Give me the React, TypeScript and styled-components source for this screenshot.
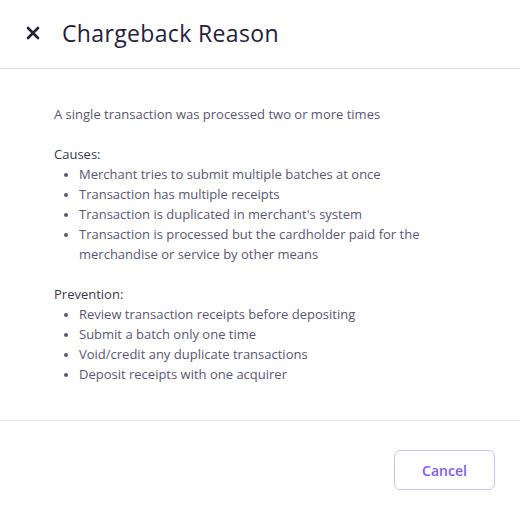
import React from 'react';
import styled, { createGlobalStyle } from 'styled-components';

const GlobalStyle = createGlobalStyle`
  html, body {
    margin: 0;
    padding: 0;
    background: #ffffff;
  }
  body {
    font-family: "Open Sans", "Noto Sans", sans-serif;
  }
`;

const causes = [
  'Merchant tries to submit multiple batches at once',
  'Transaction has multiple receipts',
  "Transaction is duplicated in merchant's system",
  'Transaction is processed but the cardholder paid for the merchandise or service by other means',
];

const prevention = [
  'Review transaction receipts before depositing',
  'Submit a batch only one time',
  'Void/credit any duplicate transactions',
  'Deposit receipts with one acquirer',
];

const App = () => {
  return (
    <>
      <GlobalStyle />
      <Modal>
        <Header>
          <CloseButton aria-label="Close">
            <svg width="14" height="14" viewBox="0 0 14 14">
              <path d="M2 2 L12 12 M12 2 L2 12" stroke="#25213b" strokeWidth="2.6" strokeLinecap="round" />
            </svg>
          </CloseButton>
          <Title>Chargeback Reason</Title>
        </Header>
        <Body>
          <Summary>A single transaction was processed two or more times</Summary>
          <Section>
            <SectionTitle>Causes:</SectionTitle>
            <List>
              {causes.map((c) => (
                <Item key={c}>{c}</Item>
              ))}
            </List>
          </Section>
          <Section>
            <SectionTitle>Prevention:</SectionTitle>
            <List>
              {prevention.map((p) => (
                <Item key={p}>{p}</Item>
              ))}
            </List>
          </Section>
        </Body>
        <Footer>
          <CancelButton>Cancel</CancelButton>
        </Footer>
      </Modal>
    </>
  );
};

const Modal = styled.div`
  width: 520px;
  height: 516px;
  display: flex;
  flex-direction: column;
  background: #fff;
`;

const Header = styled.div`
  height: 69px;
  box-sizing: border-box;
  display: flex;
  align-items: center;
  gap: 22px;
  padding: 0 0 2px 25px;
  border-bottom: 1px solid #dcdbe2;
`;

const CloseButton = styled.button`
  border: none;
  background: none;
  padding: 0;
  width: 15px;
  height: 15px;
  display: flex;
  align-items: center;
  justify-content: center;
  cursor: pointer;
`;

const Title = styled.h1`
  margin: 0;
  font-size: 23px;
  font-weight: 500;
  color: #25213b;
  letter-spacing: 0.35px;
`;

const Body = styled.div`
  flex: 1;
  padding: 35px 54px 0 54px;
  display: flex;
  flex-direction: column;
  gap: 20px;
  border-bottom: 1px solid #e6e5ea;
  font-size: 13px;
  line-height: 20px;
  color: #5a5672;
`;

const Summary = styled.p`
  margin: 0;
`;

const Section = styled.div`
  display: flex;
  flex-direction: column;
`;

const SectionTitle = styled.div`
  color: #3a364f;
  font-weight: 500;
`;

const List = styled.ul`
  margin: 0;
  padding: 0 0 0 25px;
  list-style: disc;
  width: 350px;

  li::marker {
    color: #5a5672;
    font-size: 11px;
  }
`;

const Item = styled.li``;

const Footer = styled.div`
  height: 95px;
  box-sizing: border-box;
  display: flex;
  justify-content: flex-end;
  align-items: flex-start;
  padding: 29px 25px 0 0;
`;

const CancelButton = styled.button`
  width: 101px;
  height: 40px;
  border: 1px solid #cbc2f7;
  border-radius: 6px;
  background: #fff;
  color: #7c5cef;
  font-family: "Open Sans", "Noto Sans", sans-serif;
  font-size: 14px;
  font-weight: 600;
  cursor: pointer;
`;

export default App;
